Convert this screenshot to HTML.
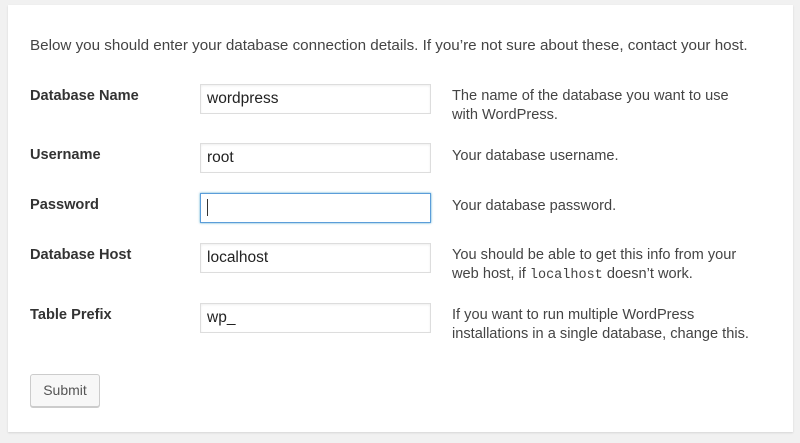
<!DOCTYPE html>
<html><head><style>
body{margin:0;background:#f1f1f1;width:800px;height:443px;overflow:hidden;font-family:"Liberation Sans",sans-serif;color:#444;}
.card{position:absolute;left:8px;top:5px;width:785px;height:427px;background:#fff;box-shadow:0 1px 2px rgba(0,0,0,.12);}
.t{position:absolute;font-size:15.2px;white-space:nowrap;line-height:19px;}
.l{position:absolute;left:30px;font-weight:bold;font-size:14.6px;color:#333;}
.i{position:absolute;left:200px;border:1px solid #ddd;box-shadow:inset 0 1px 2px rgba(0,0,0,.07);background:#fff;font-size:15.5px;color:#222;line-height:28px;padding-left:6px;box-sizing:border-box;width:231px;height:30px;}
.d{position:absolute;left:452px;font-size:14.6px;line-height:19px;color:#444;white-space:nowrap;}
code{font-family:"Liberation Mono",monospace;font-size:13.5px;}
.btn{position:absolute;left:30px;top:374px;width:70px;height:33px;border:1px solid #ccc;border-radius:3px;background:#f7f7f7;box-shadow:0 1px 0 #ccc;box-sizing:border-box;font-size:14px;color:#555;text-align:center;line-height:31px;}
</style></head><body>
<div class="card"></div>
<div class="t" style="left:30px;top:36px">Below you should enter your database connection details. If you’re not sure about these, contact your host.</div>
<div class="l" style="top:88px">Database Name</div>
<div class="i" style="top:84px">wordpress</div>
<div class="d" style="top:87px">The name of the database you want to use<br>with WordPress.</div>
<div class="l" style="top:147px">Username</div>
<div class="i" style="top:143px">root</div>
<div class="d" style="top:147px">Your database username.</div>
<div class="l" style="top:197px">Password</div>
<div class="i" style="top:193px;border-color:#5b9dd9;box-shadow:0 0 2px rgba(30,140,190,.8)"><span style="display:inline-block;width:1px;height:17px;background:#333;vertical-align:middle"></span></div>
<div class="d" style="top:197px">Your database password.</div>
<div class="l" style="top:247px">Database Host</div>
<div class="i" style="top:243px">localhost</div>
<div class="d" style="top:246px">You should be able to get this info from your<br>web host, if <code>localhost</code> doesn’t work.</div>
<div class="l" style="top:307px">Table Prefix</div>
<div class="i" style="top:303px">wp_</div>
<div class="d" style="top:306px">If you want to run multiple WordPress<br>installations in a single database, change this.</div>
<div class="btn">Submit</div>
</body></html>
